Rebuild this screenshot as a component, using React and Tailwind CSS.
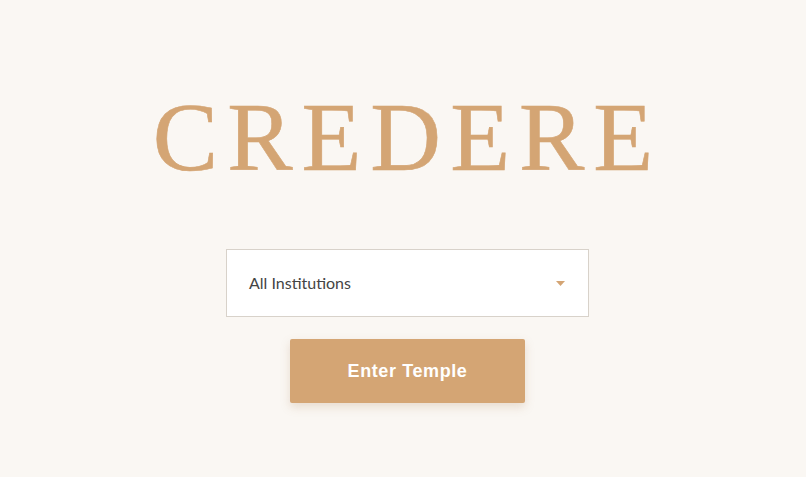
export default function App() {
  return (
    <div className="w-full h-[477px] bg-[#faf7f3] flex flex-col items-center pl-[9px] overflow-hidden">
      <h1 className="mt-[81px] text-[98px] leading-[112px] tracking-[9px] text-[#d4a574] font-['Liberation_Serif','DejaVu_Serif',serif] [-webkit-text-stroke:0.6px_#d4a574]">
        CREDERE
      </h1>
      <div className="mt-[56px] w-[363px] h-[68px] bg-white border border-[#d8d2ca] flex items-center justify-between pl-[22px] pr-[23px] font-['Lato','Open_Sans',sans-serif]">
        <span className="text-[16px] text-[#444444]">All Institutions</span>
        <svg width="9" height="5" viewBox="0 0 9 5">
          <path d="M0 0 H9 L4.5 5 Z" fill="#d4a574" />
        </svg>
      </div>
      <button className="mt-[22px] w-[235px] h-[64px] bg-[#d4a574] rounded-[2px] text-white font-bold text-[18px] tracking-[0.6px] shadow-[0_4px_10px_rgba(180,140,100,0.25)] font-['Liberation_Sans',Arial,sans-serif]">
        Enter Temple
      </button>
    </div>
  );
}
